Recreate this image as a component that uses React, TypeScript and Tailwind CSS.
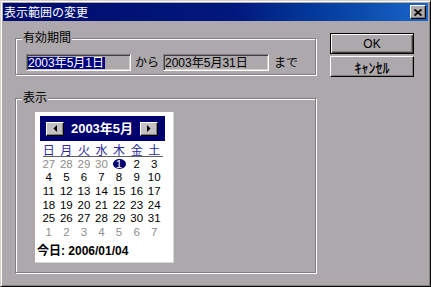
import React from "react";

const days = ["日", "月", "火", "水", "木", "金", "土"];
type Cell = { n: number; gray?: boolean; sel?: boolean };
const cells: Cell[] = [
  { n: 27, gray: true },
  { n: 28, gray: true },
  { n: 29, gray: true },
  { n: 30, gray: true },
  { n: 1, sel: true },
  { n: 2 },
  { n: 3 },
  ...Array.from({ length: 28 }, (_, i) => ({ n: i + 4 })),
  ...Array.from({ length: 7 }, (_, i) => ({ n: i + 1, gray: true })),
];

function ArrowBtn({ dir }: { dir: "l" | "r" }) {
  return (
    <div className="w-[18px] h-[14px] bg-[#c4c0c3] border-t border-l border-white border-r border-b border-r-black border-b-black shadow-[inset_-1px_-1px_0_#808080] flex items-center justify-center">
      <svg width="4" height="7" viewBox="0 0 4 7">
        {dir === "l" ? (
          <polygon points="4,0 4,7 0.5,3.5" fill="#000" />
        ) : (
          <polygon points="0,0 0,7 3.5,3.5" fill="#000" />
        )}
      </svg>
    </div>
  );
}

export default function App() {
  return (
    <div className="w-[431px] h-[287px] bg-[#aca8ab] border border-t-[#d4d0c8] border-l-[#d4d0c8] border-r-[#0a0a0a] border-b-[#0a0a0a] shadow-[inset_1px_1px_0_#ffffff,inset_-1px_-1px_0_#808080] p-[2px] font-['Liberation_Sans','Noto_Sans_CJK_JP',sans-serif] text-[12px] text-black overflow-hidden">
      {/* Title bar */}
      <div className="h-[18px] bg-linear-to-r from-[#000a6c] via-[#02187e] via-55% to-[#1a66c8] flex items-center justify-between pl-[1px] pr-[2px]">
        <span className="text-white text-[12px] leading-[12px] font-['Noto_Sans_CJK_JP',sans-serif]">
          表示範囲の変更
        </span>
        <div className="w-[16px] h-[14px] bg-[#aca8ab] border-t border-l border-white border-r border-b border-r-black border-b-black shadow-[inset_-1px_-1px_0_#808080] flex items-center justify-center">
          <svg width="8" height="7" viewBox="0 0 8 7">
            <path d="M0.5 0.5 L7.5 6.5 M7.5 0.5 L0.5 6.5" stroke="#000" strokeWidth="1.8" />
          </svg>
        </div>
      </div>

      {/* Body */}
      <div className="flex pl-[12px] pt-[12px]">
        {/* Left column */}
        <div className="pt-[5px] w-[302px]">
          {/* Group 1 */}
          <div className="relative w-[301px] h-[37px] border border-[#808080] shadow-[inset_1px_1px_0_#ffffff,1px_1px_0_#ffffff] pl-[10px] pt-[15px]">
            <span className="absolute left-[6px] top-[-7px] bg-[#aca8ab] px-[1px] leading-[12px]">
              有効期間
            </span>
            <div className="flex items-center">
              <div className="w-[105px] h-[17px] border border-t-[#808080] border-l-[#808080] border-r-white border-b-white shadow-[inset_1px_1px_0_#404040,inset_-1px_-1px_0_#d4d0c8] flex items-center pl-[1px]">
                <span className="bg-[#000080] text-white leading-[12px] h-[12px] pr-[1px]">
                  2003年5月1日
                </span>
              </div>
              <span className="ml-[4px] leading-[12px]">から</span>
              <div className="ml-[4px] w-[106px] h-[17px] border border-t-[#808080] border-l-[#808080] border-r-white border-b-white shadow-[inset_1px_1px_0_#404040,inset_-1px_-1px_0_#d4d0c8] flex items-center pl-[1px]">
                <span className="leading-[12px]">2003年5月31日</span>
              </div>
              <span className="ml-[5px] leading-[12px]">まで</span>
            </div>
          </div>

          {/* Group 2 */}
          <div className="relative mt-[23px] w-[301px] h-[175px] border border-[#808080] shadow-[inset_1px_1px_0_#ffffff,1px_1px_0_#ffffff] pl-[19px] pt-[13px]">
            <span className="absolute left-[6px] top-[-7px] bg-[#aca8ab] px-[1px] leading-[12px]">
              表示
            </span>
            {/* Calendar */}
            <div className="w-[139px] h-[151px] bg-white border-r border-b border-[#d8d8d8] pl-[5px] pt-[4px]">
              <div className="w-[125px] h-[25px] bg-[#00006e] flex items-center justify-between pl-[6px] pr-[7px]">
                <ArrowBtn dir="l" />
                <span className="text-white font-bold text-[13px] leading-[13px]">2003年5月</span>
                <ArrowBtn dir="r" />
              </div>
              <div className="mt-[3px] w-[123px] grid grid-cols-7 h-[12px]">
                {days.map((d) => (
                  <div
                    key={d}
                    className="text-center text-[#2a2a9e] leading-[12px] font-['Noto_Sans_CJK_JP',sans-serif]"
                  >
                    {d}
                  </div>
                ))}
              </div>
              <div className="ml-[3px] w-[120px] h-px bg-[#606060]" />
              <div className="w-[123px] grid grid-cols-7 auto-rows-[13.6px] text-[11.5px]">
                {cells.map((c, i) => (
                  <div key={i} className="flex items-center justify-center leading-[12px]">
                    {c.sel ? (
                      <span className="w-[13px] h-[10px] rounded-[50%] bg-[#00006e] text-white flex items-center justify-center leading-[10px]">
                        {c.n}
                      </span>
                    ) : (
                      <span className={c.gray ? "text-[#8e8e8e]" : "text-black"}>{c.n}</span>
                    )}
                  </div>
                ))}
              </div>
              <div className="mt-[6px] -ml-[3px] font-bold leading-[13px] h-[13px]">
                今日: 2006/01/04
              </div>
            </div>
          </div>
        </div>

        {/* Right column */}
        <div className="ml-[13px] flex flex-col gap-[2px]">
          <div className="w-[84px] h-[21px] border border-black shadow-[inset_1px_1px_0_#ffffff,inset_-1px_-1px_0_#404040,inset_-2px_-2px_0_#808080] flex items-center justify-center leading-[12px]">
            OK
          </div>
          <div className="w-[84px] h-[21px] border border-t-white border-l-white border-r-black border-b-black shadow-[inset_-1px_-1px_0_#808080] flex items-center justify-center leading-[14px] text-[14px] font-['Noto_Sans_CJK_JP',sans-serif] font-medium">
            ｷｬﾝｾﾙ
          </div>
        </div>
      </div>
    </div>
  );
}
